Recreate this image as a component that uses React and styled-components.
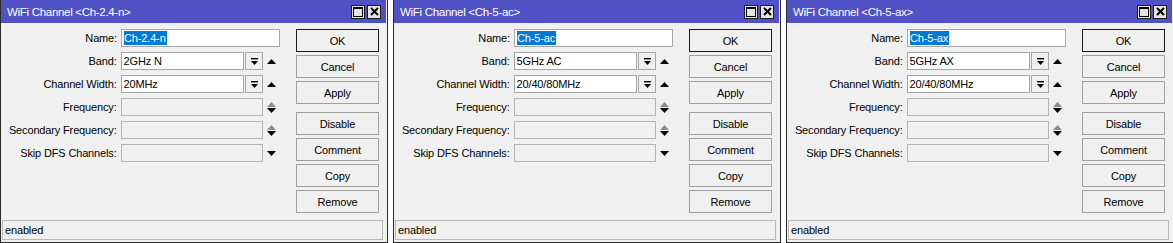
import React from "react";
import styled, { createGlobalStyle } from "styled-components";

const Global = createGlobalStyle`
  html, body { margin: 0; padding: 0; background: #ffffff; }
  body { width: 1173px; height: 243px; overflow: hidden; font-family: "Liberation Sans", Arial, sans-serif; }
`;

const Desktop = styled.div`
  display: flex;
  gap: 5px;
  width: 1173px;
  height: 243px;
  overflow: hidden;
`;

const Window = styled.div`
  flex: 0 0 388px;
  height: 243px;
  box-sizing: border-box;
  display: flex;
  flex-direction: column;
  background: #f0f0f0;
  border: 1px solid #2b2b2b;
  border-top: none;
`;

const TitleBar = styled.div`
  height: 23px;
  flex: 0 0 23px;
  margin-right: 1px;
  background: #5151c6;
  display: flex;
  align-items: center;
  padding-left: 6px;
  padding-right: 5px;
  color: #ffffff;
  font-size: 11.5px;
  letter-spacing: -0.3px;
`;

const TitleText = styled.div`
  flex: 1;
  white-space: nowrap;
`;

const TitleButtons = styled.div`
  display: flex;
  gap: 2px;
`;

const TitleButton = styled.div`
  width: 12px;
  height: 12px;
  border: 1px solid #1c1c1c;
  background: #e4e4e4;
  display: flex;
  align-items: center;
  justify-content: center;
`;

const Body = styled.div`
  display: flex;
  padding-top: 6px;
  flex: 1;
`;

const Form = styled.div`
  display: flex;
  flex-direction: column;
  gap: 5px;
  width: 279px;
`;

const Row = styled.div`
  display: flex;
  align-items: center;
  height: 18px;
`;

const Label = styled.div`
  width: 116px;
  margin-right: 4px;
  text-align: right;
  font-size: 11px;
  letter-spacing: -0.15px;
  color: #000;
  white-space: nowrap;
`;

const Input = styled.div`
  box-sizing: border-box;
  width: ${(p) => p.$w}px;
  height: 18px;
  border: 1px solid ${(p) => (p.$disabled ? "#b4b4b4" : "#a6a6a6")};
  background: ${(p) => (p.$disabled ? "#f0f0f0" : "#ffffff")};
  font-size: 11px;
  letter-spacing: -0.15px;
  color: #000;
  display: flex;
  align-items: center;
  padding-left: 2px;
  white-space: nowrap;
  overflow: hidden;
`;

const Selected = styled.span`
  background: #0078d7;
  color: #ffffff;
  line-height: 14px;
  padding-right: 1px;
`;

const DropButton = styled.div`
  box-sizing: border-box;
  width: 18px;
  height: 18px;
  margin-left: 1px;
  border: 1px solid #a6a6a6;
  background: #f0f0f0;
  display: flex;
  align-items: center;
  justify-content: center;
`;

const ArrowCell = styled.div`
  width: 17px;
  height: 18px;
  display: flex;
  flex-direction: column;
  align-items: center;
  justify-content: center;
  gap: 1px;
`;

const ButtonCol = styled.div`
  margin-left: 16px;
  display: flex;
  flex-direction: column;
  gap: 3px;
`;

const Button = styled.div`
  box-sizing: border-box;
  width: 83px;
  height: 23px;
  margin-top: ${(p) => (p.$sep ? "5px" : "0")};
  border: 1px solid ${(p) => (p.$default ? "#1a1a1a" : "#a0a0a0")};
  background: #f0f0f0;
  display: flex;
  align-items: center;
  justify-content: center;
  font-size: 11px;
  letter-spacing: -0.15px;
  color: #000;
`;

const StatusBar = styled.div`
  box-sizing: border-box;
  height: 20px;
  margin: 0 4px 2px 1px;
  border: 1px solid #b8b8b8;
  background: #f0f0f0;
  font-size: 11px;
  letter-spacing: -0.15px;
  display: flex;
  align-items: center;
  padding-left: 2px;
  color: #000;
`;

const DropIcon = () => (
  <svg width="9" height="9" viewBox="0 0 9 9">
    <rect x="1" y="1" width="7" height="1.4" fill="#000" />
    <polygon points="1,4 8,4 4.5,8" fill="#000" />
  </svg>
);

const Up = ({ color = "#000" }) => (
  <svg width="9" height="5" viewBox="0 0 9 5">
    <polygon points="0,5 9,5 4.5,0" fill={color} />
  </svg>
);

const Down = ({ color = "#000" }) => (
  <svg width="9" height="5" viewBox="0 0 9 5">
    <polygon points="0,0 9,0 4.5,5" fill={color} />
  </svg>
);

const MaxIcon = () => (
  <svg width="10" height="10" viewBox="0 0 10 10">
    <rect x="0.5" y="0.5" width="9" height="9" fill="none" stroke="#000" />
    <rect x="0" y="0" width="10" height="2" fill="#000" />
  </svg>
);

const CloseIcon = () => (
  <svg width="9" height="9" viewBox="0 0 9 9">
    <path d="M1 1 L8 8 M8 1 L1 8" stroke="#000" strokeWidth="2" />
  </svg>
);

const buttons = ["OK", "Cancel", "Apply", "Disable", "Comment", "Copy", "Remove"];

function ChannelWindow({ name, band, width }) {
  return (
    <Window>
      <TitleBar>
        <TitleText>{`WiFi Channel <${name}>`}</TitleText>
        <TitleButtons>
          <TitleButton><MaxIcon /></TitleButton>
          <TitleButton><CloseIcon /></TitleButton>
        </TitleButtons>
      </TitleBar>
      <Body>
        <Form>
          <Row>
            <Label>Name:</Label>
            <Input $w={159}><Selected>{name}</Selected></Input>
          </Row>
          <Row>
            <Label>Band:</Label>
            <Input $w={124}>{band}</Input>
            <DropButton><DropIcon /></DropButton>
            <ArrowCell><Up /></ArrowCell>
          </Row>
          <Row>
            <Label>Channel Width:</Label>
            <Input $w={124}>{width}</Input>
            <DropButton><DropIcon /></DropButton>
            <ArrowCell><Up /></ArrowCell>
          </Row>
          <Row>
            <Label>Frequency:</Label>
            <Input $w={143} $disabled />
            <ArrowCell><Up color="#8c8c8c" /><Down /></ArrowCell>
          </Row>
          <Row>
            <Label>Secondary Frequency:</Label>
            <Input $w={143} $disabled />
            <ArrowCell><Up color="#8c8c8c" /><Down /></ArrowCell>
          </Row>
          <Row>
            <Label>Skip DFS Channels:</Label>
            <Input $w={143} $disabled />
            <ArrowCell><Down /></ArrowCell>
          </Row>
        </Form>
        <ButtonCol>
          {buttons.map((b, i) => (
            <Button key={b} $default={i === 0} $sep={b === "Disable"}>{b}</Button>
          ))}
        </ButtonCol>
      </Body>
      <StatusBar>enabled</StatusBar>
    </Window>
  );
}

export default function App() {
  return (
    <>
      <Global />
      <Desktop>
        <ChannelWindow name="Ch-2.4-n" band="2GHz N" width="20MHz" />
        <ChannelWindow name="Ch-5-ac" band="5GHz AC" width="20/40/80MHz" />
        <ChannelWindow name="Ch-5-ax" band="5GHz AX" width="20/40/80MHz" />
      </Desktop>
    </>
  );
}
